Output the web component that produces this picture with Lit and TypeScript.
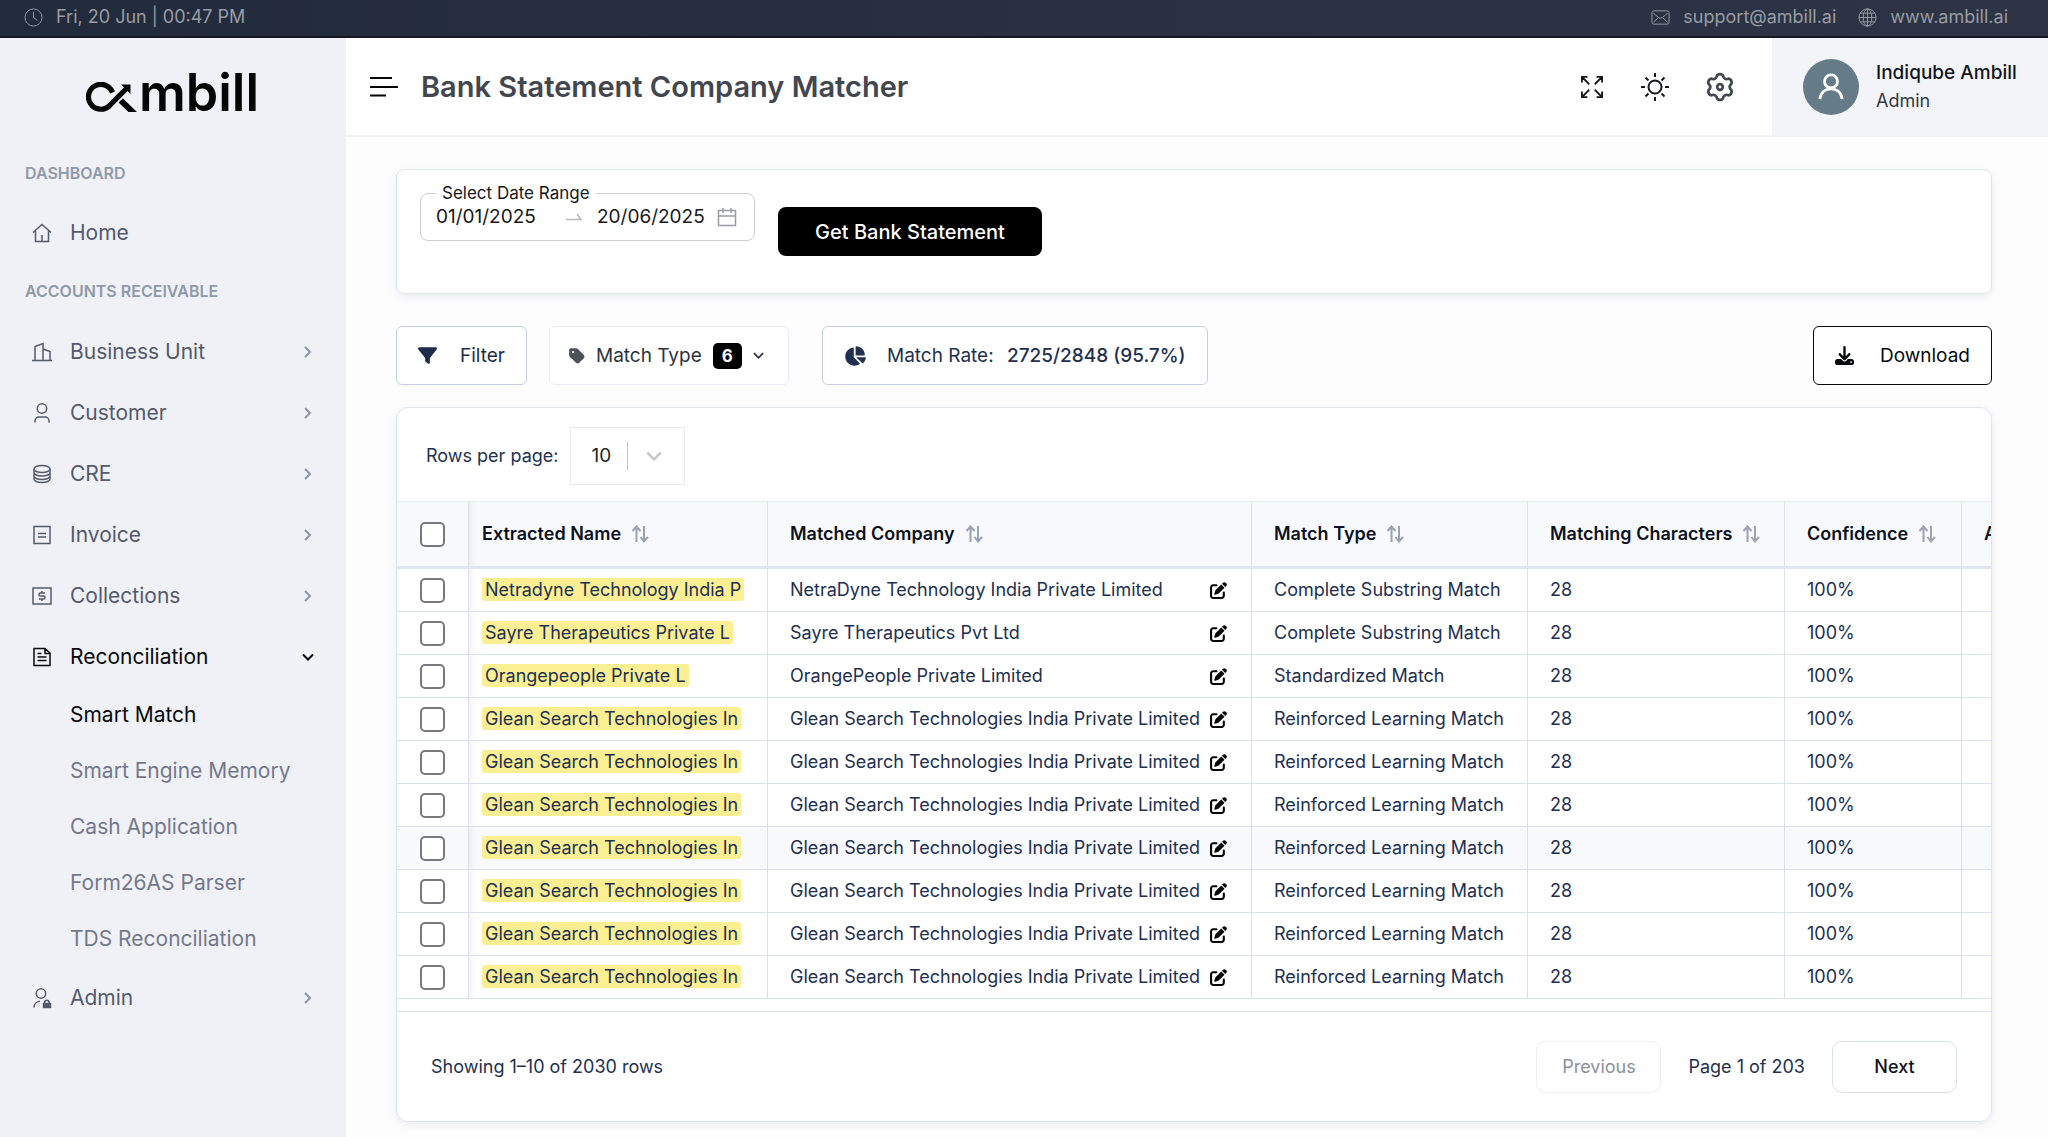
import { LitElement, html, css, svg, nothing, TemplateResult } from "lit";
import { customElement, state } from "lit/decorators.js";
import { classMap } from "lit/directives/class-map.js";

type Icon = { box: string; body: TemplateResult };

const line = (box: string, body: TemplateResult): Icon => ({ box, body });

const ICONS: Record<string, Icon> = {
  clock: line("0 0 20 20", svg`<circle cx="10" cy="10" r="9"/><path d="M10 4v6l4 3"/>`),
  mail: line("0 0 20 20", svg`<rect x="1" y="3" width="18" height="14" rx="2"/><path d="M2.500 5.500 8 10q2 1.500 4 0l5.500-4.500M2.500 15 7.500 10.500M17.500 15l-5-4.500"/>`),
  globe: line("0 0 20 20", svg`<circle cx="10" cy="10" r="9"/><ellipse cx="10" cy="10" rx="4.500" ry="9"/><path d="M10 1v18M1 10h18M2.500 5.500h15M2.500 14.500h15"/>`),
  home: line("0 0 20 20", svg`<path d="M1 9.500 10 1.500l9 8M3.500 8v10.500h13V8M10 18.500V12"/>`),
  building: line("0 0 20 20", svg`<path d="M0 18.500h20M3 18.500V4.500l8-3v17M11 7l7 2.500v9"/>`),
  user: line("0 0 20 20", svg`<circle cx="10" cy="5.500" r="4.700"/><path d="M3 19.500v-1.500a4 4 0 0 1 4-4h6a4 4 0 0 1 4 4v1.500"/>`),
  database: line("0 0 20 20", svg`<ellipse cx="10" cy="5" rx="8" ry="3.500"/><path d="M2 5v10c0 2 3.500 3.500 8 3.500s8-1.500 8-3.500V5M2 8.500C2 10.500 5.500 12 10 12s8-1.500 8-3.500M2 12c0 2 3.500 3.500 8 3.500s8-1.500 8-3.500"/>`),
  invoice: line("0 0 20 20", svg`<path d="M2 1.500h16v17H2zM6 8.500h8M6 12h8"/>`),
  money: line("0 0 20 20", svg`<path d="M1 2h18v16H1zM13 7H8.500a1.500 1.500 0 0 0 0 3h3a1.500 1.500 0 0 1 0 3H7M10 5v2M10 13v2"/>`),
  file: line("0 0 20 20", svg`<path d="M2 1.500h11L18 6v12.500H2zM13 2v4.500h5M5.500 6.500h4M5.500 10h9M5.500 13.500h9"/>`),
  admin: line("0 0 20 20", svg`<circle cx="9" cy="5.500" r="4.700"/><path d="M2 19.500c0-3.500 2.500-6 6-6.300"/><path d="M12.500 15.500v-1a2.300 2.300 0 0 1 4.600 0v1"/><rect x="11.500" y="15.500" width="7" height="4" fill="currentColor"/>`),
  chevron: line("0 0 12 12", svg`<path d="m3 1 5 5-5 5"/>`),
  down: line("0 0 12 12", svg`<path d="m1 3.500 5 5 5-5"/>`),
  menu: line("0 0 28 20", svg`<path d="M0 1h22M0 10h28M0 18.500h16"/>`),
  expand: line("0 0 24 24", svg`<path d="M1 7V1h6M1 1l8 8M17 1h6v6M23 1l-8 8M1 17v6h6M1 23l8-8M23 17v6h-6M23 23l-8-8"/>`),
  sun: line("0 0 28 28", svg`<circle cx="14" cy="14" r="6.500"/><path d="M14 0v4M14 24v4M0 14h4M24 14h4M4.500 4.500l3 3M20.500 20.500l3 3M4.500 23.500l3-3M20.500 7.500l3-3"/>`),
  gear: line("0 0 28 28", svg`<circle cx="14" cy="14" r="3"/><path stroke-linejoin="round" d="M10.900 1.600A4 4 0 0 1 17.100 1.600Q18.300 6.600 23.200 5.100A4 4 0 0 1 26.300 10.500Q22.500 14 26.300 17.500A4 4 0 0 1 23.200 22.900Q18.300 21.400 17.100 26.400A4 4 0 0 1 10.900 26.400Q9.700 21.400 4.800 22.900A4 4 0 0 1 1.700 17.500Q5.500 14 1.700 10.500A4 4 0 0 1 4.800 5.100Q9.700 6.600 10.900 1.600z"/>`),
  avatar: line("0 0 28 28", svg`<circle cx="14" cy="8" r="7"/><path d="M2 27c1-7.500 6-11 12-11s11 3.500 12 11"/>`),
  arrow: line("0 0 16 8", svg`<path d="M0 6.500h15L11 1"/>`),
  calendar: line("0 0 20 20", svg`<path d="M1.500 3.500h17v15h-17zM1.500 9h17M6 1v5M14 1v5"/>`),
  sort: line("0 0 18 18", svg`<path d="M5.500 17V2M1.500 6l4-4.500 4 4.500M13 1v15M9.500 12l3.500 4.500 4-4.500"/>`),
  filter: line("0 0 512 512", svg`<path d="M3.900 54.900C10.500 40.900 24.500 32 40 32H472c15.500 0 29.500 8.900 36.100 22.900s4.600 30.500-5.200 42.500L320 320.900V448c0 12.100-6.800 23.200-17.700 28.600s-23.800 4.300-33.500-3l-64-48c-8.100-6-12.800-15.500-12.800-25.600V320.900L9 97.300C-.7 85.400-2.800 68.800 3.900 54.900z"/>`),
  tag: line("0 0 448 512", svg`<path d="M0 80V229.500c0 17 6.700 33.300 18.700 45.300l176 176c25 25 65.500 25 90.500 0L418.700 317.300c25-25 25-65.500 0-90.500l-176-176c-12-12-28.300-18.700-45.300-18.700H48C21.500 32 0 53.500 0 80zm112 32a32 32 0 1 1 0 64 32 32 0 1 1 0-64z"/>`),
  pie: line("0 0 576 512", svg`<path d="M304 240V16.600c0-9 7-16.600 16-16.600C443.700 0 544 100.300 544 224c0 9-7.600 16-16.600 16H304zM32 272C32 150.700 122.100 50.300 239 34.300c9.200-1.300 17 6.100 17 15.400V288L412.500 444.500c6.700 6.700 6.200 17.700-1.500 23.100C371.800 495.600 323.800 512 272 512C139.500 512 32 404.600 32 272zm526.400 16c9.300 0 16.600 7.800 15.400 17c-7.700 55.900-34.600 105.600-73.900 142.300c-6 5.600-15.400 5.200-21.200-.7L320 288H558.400z"/>`),
  download: line("0 0 512 512", svg`<path d="M288 32c0-17.700-14.300-32-32-32s-32 14.300-32 32V274.700l-73.400-73.400c-12.500-12.500-32.800-12.500-45.300 0s-12.500 32.800 0 45.300l128 128c12.500 12.500 32.800 12.500 45.300 0l128-128c12.500-12.500 12.500-32.800 0-45.300s-32.800-12.500-45.300 0L288 274.700V32zM64 352c-35.300 0-64 28.700-64 64v32c0 35.300 28.700 64 64 64H448c35.300 0 64-28.700 64-64V416c0-35.300-28.700-64-64-64H346.500l-45.300 45.300c-25 25-65.500 25-90.500 0L165.500 352H64zm368 56a24 24 0 1 1 0 48 24 24 0 1 1 0-48z"/>`),
  edit: line("0 0 512 512", svg`<path d="M471.600 21.700c-21.900-21.900-57.300-21.900-79.200 0L362.300 51.700l97.900 97.900 30.100-30.100c21.900-21.900 21.900-57.300 0-79.200L471.600 21.700zm-299.200 220c-6.100 6.100-10.800 13.600-13.500 21.900l-29.600 88.800c-2.900 8.600-.6 18.100 5.800 24.600s15.900 8.700 24.600 5.800l88.800-29.600c8.200-2.700 15.700-7.400 21.900-13.500L437.700 172.300 339.700 74.300 172.400 241.700zM96 64C43 64 0 107 0 160V416c0 53 43 96 96 96H352c53 0 96-43 96-96V320c0-17.700-14.300-32-32-32s-32 14.300-32 32v96c0 17.700-14.300 32-32 32H96c-17.700 0-32-14.300-32-32V160c0-17.700 14.300-32 32-32h96c17.700 0 32-14.300 32-32s-14.300-32-32-32H96z"/>`),
};

const icon = (name: string, cls: string, solid = false) => html`
  <svg class=${`icon ${solid ? "solid" : "stroke"} ${cls}`} viewBox=${ICONS[name].box} aria-hidden="true">${ICONS[name].body}</svg>`;

interface NavItem {
  label: string;
  icon: string;
  children?: string[];
}

const NAV: NavItem[] = [
  { label: "Business Unit", icon: "building" },
  { label: "Customer", icon: "user" },
  { label: "CRE", icon: "database" },
  { label: "Invoice", icon: "invoice" },
  { label: "Collections", icon: "money" },
  {
    label: "Reconciliation",
    icon: "file",
    children: ["Smart Match", "Smart Engine Memory", "Cash Application", "Form26AS Parser", "TDS Reconciliation"],
  },
  { label: "Admin", icon: "admin" },
];

interface Row {
  extracted: string;
  matched: string;
  type: string;
}

const glean: Row = {
  extracted: "Glean Search Technologies In",
  matched: "Glean Search Technologies India Private Limited",
  type: "Reinforced Learning Match",
};

const ROWS: Row[] = [
  { extracted: "Netradyne Technology India P", matched: "NetraDyne Technology India Private Limited", type: "Complete Substring Match" },
  { extracted: "Sayre Therapeutics Private L", matched: "Sayre Therapeutics Pvt Ltd", type: "Complete Substring Match" },
  { extracted: "Orangepeople Private L", matched: "OrangePeople Private Limited", type: "Standardized Match" },
  ...Array.from({ length: 7 }, () => glean),
];

const COLUMNS = ["Extracted Name", "Matched Company", "Match Type", "Matching Characters", "Confidence", "Action"];

@customElement("app-root")
export class AppRoot extends LitElement {
  @state() private activeRow = 6;

  static styles = css`
    :host {
      display: block;
      min-height: 100vh;
      background: #fdfdfe;
      color: #22304f;
      font-family: Inter, "Liberation Sans", sans-serif;
      font-size: 18px;
      line-height: 24px;
    }
    * { box-sizing: border-box; }
    button, input, select { font: inherit; color: inherit; margin: 0; }
    button { background: none; border: 0; padding: 0; cursor: pointer; }
    a { color: inherit; text-decoration: none; }
    ul { list-style: none; margin: 0; padding: 0; }
    .page { display: flex; flex-direction: column; min-height: 100vh; }
    .icon { display: block; flex: none; width: 20px; height: 20px; overflow: visible; }
    .stroke { fill: none; stroke: currentColor; stroke-width: 1.500; }
    .solid { fill: currentColor; }

    .topbar {
      display: flex;
      align-items: center;
      justify-content: space-between;
      padding: 0 40px 2px 24px;
      height: 38px;
      background: linear-gradient(90deg, #222b3c, #2d3445);
      border-bottom: 2px solid #16181e;
      color: #999ca3;
    }
    .topbar .stroke { stroke-width: 1; }
    .topbar a, .clock, .contact { display: flex; align-items: center; }
    .clock { gap: 13px; }
    .contact { gap: 22px; }
    .contact a { gap: 13px; }
    .glyph { width: 19px; height: 19px; }

    .body { display: flex; flex: 1; }
    .sidebar { flex: none; width: 346px; padding: 32px 32px 24px 25px; background: #f0f1f6; color: #545a6c; }
    .logo { display: flex; align-items: flex-end; justify-content: center; gap: 2px; margin-bottom: 47px; padding-left: 6px; color: #050505; }
    .mark { width: 51px; height: 30px; margin-bottom: 4px; }
    .word { font-size: 52px; line-height: 46px; font-weight: 600; }
    .group { margin: 0; font-size: 16px; line-height: 20px; font-weight: 600; color: #8f99a8; }
    .home { margin: 19px 0 18px; }
    .list { margin-top: 20px; }
    .item { display: flex; align-items: center; gap: 18px; width: 100%; height: 61px; padding-left: 7px; font-size: 21px; text-align: left; }
    .item .label { flex: 1; }
    .open { color: #08090c; }
    .caret { width: 12px; height: 12px; color: #8d97a6; stroke-width: 2; }
    .open .caret { color: #08090c; }
    .leaf { display: flex; align-items: center; height: 56px; padding-left: 45px; font-size: 21px; color: #74788b; }
    .current { color: #08090c; }

    .main { flex: 1; min-width: 0; }
    .header { display: flex; align-items: stretch; height: 99px; border-bottom: 2px solid #f1f3f9; background: #fff; }
    .heading { display: flex; align-items: center; gap: 23px; flex: 1; padding-left: 24px; }
    .menu { width: 28px; height: 20px; stroke-width: 2; color: #050505; }
    h1 { margin: 0; font-size: 29px; line-height: 36px; font-weight: 600; color: #42464f; }
    .tools { display: flex; align-items: center; gap: 38px; padding-right: 39px; color: #17181c; }
    .expand { width: 22px; height: 22px; stroke-width: 2; }
    .round { width: 28px; height: 28px; stroke-width: 2; }
    .cog { width: 26px; height: 26px; stroke-width: 3; color: #45474f; }
    .profile { display: flex; align-items: center; gap: 17px; width: 276px; padding: 0 20px 0 31px; background: #f3f4f9; line-height: 28px; text-align: left; white-space: nowrap; }
    .face { display: grid; place-items: center; flex: none; width: 56px; height: 56px; border-radius: 50%; background: #667b88; color: #fff; }
    .face .icon { width: 26px; height: 26px; stroke-width: 3; }
    .name { display: block; font-size: 19px; font-weight: 500; color: #12141c; }
    .role { display: block; color: #343842; }

    .content { padding: 32px 56px 12px 50px; }
    .card { background: #fff; border: 1px solid #dfe5ef; border-radius: 8px; box-shadow: 0 3px 8px rgba(20, 30, 60, 0.07); }
    .range { display: flex; align-items: flex-start; gap: 23px; height: 125px; padding: 13px 23px; }
    fieldset { display: flex; align-items: flex-start; margin: 0; padding: 0 15px; width: 335px; height: 58px; border: 1px solid #ccced2; border-radius: 8px; color: #16171b; }
    legend { padding: 0 6px; font-size: 17px; line-height: 20px; }
    .dates { display: flex; align-items: center; height: 28px; }
    .date { width: 112px; padding: 0; border: 0; outline: 0; background: none; font-size: 19px; line-height: 28px; }
    .arrow { width: 16px; height: 8px; margin: 0 15px 0 18px; color: #b8b9bd; }
    .calendar { margin-left: 8px; color: #9b9ca1; }
    .primary { margin-top: 24px; width: 264px; height: 49px; border-radius: 8px; background: #000; color: #fff; font-size: 20px; font-weight: 500; }

    .actions { display: flex; align-items: center; margin: 32px 0 22px; }
    .action { display: flex; align-items: center; height: 59px; padding: 0 21px; border: 1px solid #c6cee0; border-radius: 6px; background: #fff; font-size: 19px; white-space: nowrap; }
    .filter { gap: 23px; margin-right: 22px; color: #1e2c47; }
    .types { gap: 11px; width: 240px; margin-right: 33px; padding: 0 19px; border-color: #eaedf4; color: #2c3340; }
    .rate { gap: 21px; }
    .rate strong { margin-left: 8px; font-weight: 500; }
    .save { gap: 26px; margin-left: auto; border-color: #08090c; color: #08090c; }
    .tag { width: 16px; height: 18px; color: #4d5158; }
    .pie { width: 22px; height: 20px; }
    .small { width: 19px; height: 19px; }
    .count { width: 29px; height: 26px; border-radius: 5px; background: #000; color: #fff; font-size: 17px; line-height: 26px; font-weight: 700; text-align: center; }
    .tiny { width: 11px; height: 11px; stroke-width: 2; }

    .sheet { border-radius: 12px; overflow: hidden; }
    .size { display: flex; align-items: center; gap: 12px; height: 93px; padding: 2px 29px 0; }
    .picker { display: grid; align-items: center; width: 115px; height: 58px; border: 1px solid #e8ebf3; }
    .picker select { grid-area: 1 / 1; width: 100%; height: 100%; padding-left: 20px; border: 0; outline: 0; appearance: none; background: none; font-size: 19px; color: #25272d; }
    .handle { grid-area: 1 / 1; justify-self: end; display: flex; align-items: center; height: 28px; padding: 0 22px 0 18px; border-left: 1px solid #c4c5c9; pointer-events: none; }
    .handle .icon { width: 16px; height: 16px; color: #c8c9cc; stroke-width: 2; }
    .scroll { overflow: hidden; padding-bottom: 12px; }
    table { width: 1726px; min-width: 100%; table-layout: fixed; border-collapse: separate; border-spacing: 0; }
    .c0 { width: 72px; }
    .c1 { width: 299px; }
    .c2 { width: 484px; }
    .c3 { width: 276px; }
    .c4 { width: 257px; }
    .c5 { width: 177px; }
    th, td { padding: 0 22px; text-align: left; white-space: nowrap; border-right: 1px solid #dbe1ec; }
    th { height: 68px; background: #f8f9fc; border-top: 1px solid #e8ebef; border-bottom: 3px solid #e1e6ef; font-weight: 600; color: #0b1122; }
    td { height: 43px; border-bottom: 1px solid #dbe1ec; }
    .tick { padding: 0; }
    .pinned { padding: 0 13px; box-shadow: inset 8px 0 8px -8px rgba(20, 30, 60, 0.1); }
    .sort { display: flex; align-items: center; gap: 10px; font-weight: 600; }
    .sort .icon { width: 18px; height: 18px; color: #9ba1ae; stroke-width: 2; }
    .check { display: block; appearance: none; width: 25px; height: 25px; margin: 0 auto; border: 2px solid #77797f; border-radius: 5px; background: #fff; }
    .check:checked { background: #22304f; }
    mark { display: inline-block; padding: 0 3px; border-radius: 3px; background: #fbef93; color: inherit; line-height: 23px; }
    .match { display: flex; align-items: center; justify-content: space-between; }
    .edit { color: #050505; }
    .edit .icon { width: 17px; height: 17px; }
    .matched { padding-right: 24px; }
    .hover td { background: #f8f9fc; }

    .footer { display: flex; align-items: center; justify-content: space-between; height: 110px; padding: 1px 34px 0; border-top: 1px solid #dbe1ec; }
    .pager { display: flex; align-items: center; gap: 27px; }
    .step { width: 125px; height: 52px; border: 1px solid #d9dfeb; border-radius: 10px; font-weight: 500; color: #101218; }
    .step:disabled { border-color: #edeef8; color: #8c909b; font-weight: 400; }
  `;

  private nav() {
    return NAV.map(
      (n) => html`<li>
        <button class=${classMap({ item: true, open: !!n.children })} aria-expanded=${n.children ? "true" : "false"}>
          ${icon(n.icon, "")}<span class="label">${n.label}</span>${icon(n.children ? "down" : "chevron", "caret")}
        </button>
        ${n.children
          ? html`<ul>
              ${n.children.map((c, i) => html`<li><a href="#" class=${classMap({ leaf: true, current: i === 0 })}>${c}</a></li>`)}
            </ul>`
          : nothing}
      </li>`
    );
  }

  private table() {
    return html`<table>
      <colgroup>
        ${[0, 1, 2, 3, 4, 5, 6].map((i) => html`<col class=${`c${i}`} />`)}
      </colgroup>
      <thead>
        <tr>
          <th class="tick"><input class="check" type="checkbox" aria-label="Select all rows" /></th>
          ${COLUMNS.map(
            (c, i) => html`<th class=${classMap({ pinned: i === 0 })} scope="col">
              <button class="sort">${c}${icon("sort", "")}</button>
            </th>`
          )}
        </tr>
      </thead>
      <tbody>
        ${ROWS.map(
          (r, i) => html`<tr class=${classMap({ hover: i === this.activeRow })} @mouseenter=${() => (this.activeRow = i)}>
            <td class="tick"><input class="check" type="checkbox" aria-label=${`Select ${r.extracted}`} /></td>
            <td class="pinned"><mark>${r.extracted}</mark></td>
            <td class="matched">
              <div class="match"><span>${r.matched}</span><button class="edit" aria-label="Edit match">${icon("edit", "", true)}</button></div>
            </td>
            <td>${r.type}</td>
            <td>28</td>
            <td>100%</td>
            <td></td>
          </tr>`
        )}
      </tbody>
    </table>`;
  }

  render() {
    return html`<div class="page">
      <div class="topbar">
        <span class="clock">${icon("clock", "glyph")}Fri, 20 Jun | 00:47 PM</span>
        <span class="contact">
          <a href="mailto:support@ambill.ai">${icon("mail", "glyph")}support@ambill.ai</a>
          <a href="#">${icon("globe", "glyph")}www.ambill.ai</a>
        </span>
      </div>
      <div class="body">
        <nav class="sidebar">
          <div class="logo">
            <svg class="mark" viewBox="0 0 51 30" aria-hidden="true">
              <path d="M26.500 10.500A12.400 12.400 0 1 0 23 24.200L40 7" fill="none" stroke="currentColor" stroke-width="5.200" />
              <path d="M35 2.500h9.500V12zM32.500 20.500l4.500-4 14 13.500h-8.500z" fill="currentColor" />
            </svg>
            <span class="word">mbill</span>
          </div>
          <p class="group">DASHBOARD</p>
          <a href="#" class="item home">${icon("home", "")}<span class="label">Home</span></a>
          <p class="group">ACCOUNTS RECEIVABLE</p>
          <ul class="list">${this.nav()}</ul>
        </nav>
        <div class="main">
          <header class="header">
            <div class="heading">
              <button aria-label="Toggle menu">${icon("menu", "menu")}</button>
              <h1>Bank Statement Company Matcher</h1>
            </div>
            <div class="tools">
              <button aria-label="Full screen">${icon("expand", "expand")}</button>
              <button aria-label="Theme">${icon("sun", "round")}</button>
              <button aria-label="Settings">${icon("gear", "cog")}</button>
            </div>
            <button class="profile">
              <span class="face">${icon("avatar", "")}</span>
              <span><span class="name">Indiqube Ambill</span><span class="role">Admin</span></span>
            </button>
          </header>
          <main class="content">
            <section class="card range">
              <fieldset>
                <legend>Select Date Range</legend>
                <div class="dates">
                  <input class="date" type="text" aria-label="Start date" .value=${"01/01/2025"} />
                  ${icon("arrow", "arrow")}
                  <input class="date" type="text" aria-label="End date" .value=${"20/06/2025"} />
                  ${icon("calendar", "calendar")}
                </div>
              </fieldset>
              <button class="primary">Get Bank Statement</button>
            </section>
            <div class="actions">
              <button class="action filter">${icon("filter", "small", true)}Filter</button>
              <button class="action types">
                ${icon("tag", "tag", true)}<span>Match Type</span><span class="count">6</span>${icon("down", "tiny")}
              </button>
              <div class="action rate">${icon("pie", "pie", true)}<span>Match Rate: <strong>2725/2848 (95.7%)</strong></span></div>
              <button class="action save">${icon("download", "small", true)}Download</button>
            </div>
            <section class="card sheet">
              <div class="size">
                <label for="rows">Rows per page:</label>
                <div class="picker">
                  <select id="rows">
                    <option>10</option>
                    <option>25</option>
                    <option>50</option>
                  </select>
                  <span class="handle">${icon("down", "pick")}</span>
                </div>
              </div>
              <div class="scroll">${this.table()}</div>
              <div class="footer">
                <span>Showing 1–10 of 2030 rows</span>
                <div class="pager">
                  <button class="step" disabled>Previous</button>
                  <span>Page 1 of 203</span>
                  <button class="step">Next</button>
                </div>
              </div>
            </section>
          </main>
        </div>
      </div>
    </div>`;
  }
}
